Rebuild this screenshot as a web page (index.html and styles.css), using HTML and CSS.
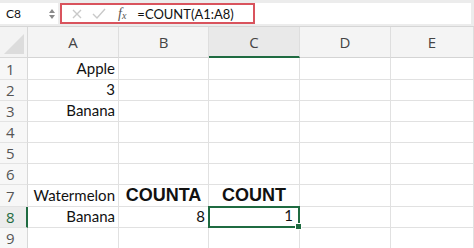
FILE: index.html
```html
<!DOCTYPE html>
<html lang="en">
<head>
    <meta charset="UTF-8">
    <title>COUNT vs COUNTA</title>
    <link rel="stylesheet" href="styles.css">
</head>
<body>
    <div class="formula-bar">
        <div class="name-box">
            <span class="cell-ref">C8</span>
            <svg class="spin" width="6" height="12" viewBox="0 0 6 12">
                <path d="M0 5 L3 1 L6 5 Z M0 7 L3 11 L6 7 Z" fill="#8a8a8a"/>
            </svg>
        </div>
        <div class="formula-box">
            <svg class="tool" width="12" height="12" viewBox="0 0 12 12">
                <path d="M2 2 L10 10 M10 2 L2 10" stroke="#c9c9c9" stroke-width="1.4" fill="none"/>
            </svg>
            <svg class="tool" width="14" height="12" viewBox="0 0 14 12">
                <path d="M1 6 L5 10 L13 1" stroke="#c9c9c9" stroke-width="1.4" fill="none"/>
            </svg>
            <span class="fx">f<sub>x</sub></span>
            <span class="formula">=COUNT(A1:A8)</span>
        </div>
        <div class="formula-rest"></div>
    </div>

    <div class="sheet">
        <div class="corner"><div class="triangle"></div></div>
        <div class="col-head">A</div>
        <div class="col-head">B</div>
        <div class="col-head active">C</div>
        <div class="col-head">D</div>
        <div class="col-head">E</div>

        <div class="row-head">1</div>
        <div class="cell">Apple</div><div class="cell"></div><div class="cell"></div><div class="cell"></div><div class="cell"></div>

        <div class="row-head">2</div>
        <div class="cell">3</div><div class="cell"></div><div class="cell"></div><div class="cell"></div><div class="cell"></div>

        <div class="row-head">3</div>
        <div class="cell">Banana</div><div class="cell"></div><div class="cell"></div><div class="cell"></div><div class="cell"></div>

        <div class="row-head">4</div>
        <div class="cell"></div><div class="cell"></div><div class="cell"></div><div class="cell"></div><div class="cell"></div>

        <div class="row-head">5</div>
        <div class="cell"></div><div class="cell"></div><div class="cell"></div><div class="cell"></div><div class="cell"></div>

        <div class="row-head">6</div>
        <div class="cell"></div><div class="cell"></div><div class="cell"></div><div class="cell"></div><div class="cell"></div>

        <div class="row-head">7</div>
        <div class="cell">Watermelon</div>
        <div class="cell title">COUNTA</div>
        <div class="cell title">COUNT</div>
        <div class="cell"></div><div class="cell"></div>

        <div class="row-head active">8</div>
        <div class="cell">Banana</div>
        <div class="cell">8</div>
        <div class="cell selected">1<span class="handle"></span></div>
        <div class="cell"></div><div class="cell"></div>

        <div class="row-head">9</div>
        <div class="cell"></div><div class="cell"></div><div class="cell"></div><div class="cell"></div><div class="cell"></div>
    </div>
</body>
</html>
```

FILE: styles.css
```css
body {
    margin: 0;
    width: 474px;
    height: 248px;
    overflow: hidden;
    background: #fff;
    font-family: Lato, "Liberation Sans", sans-serif;
    color: #111;
}

/* formula bar */
.formula-bar {
    display: flex;
    height: 27px;
    box-sizing: border-box;
    padding: 3px 0 2px;
    background: #ececec;
    border-bottom: 1px solid #d6d6d6;
}

.name-box {
    width: 58px;
    display: flex;
    align-items: center;
    justify-content: space-between;
    padding: 0 3px 0 6px;
    box-sizing: border-box;
    background: #fff;
    font-size: 12px;
}

.formula-box {
    width: 195px;
    margin-left: 2px;
    display: flex;
    align-items: center;
    box-sizing: border-box;
    border: 2px solid #d9535d;
    background: #fff;
    padding-left: 9px;
    font-size: 12px;
}

.tool {
    margin-right: 9px;
}

.fx {
    font-family: "Liberation Serif", serif;
    font-style: italic;
    font-size: 14px;
    color: #555;
    margin-left: 3px;
    margin-right: 11px;
}

.fx sub {
    font-size: 10px;
    vertical-align: -1px;
}

.formula {
    font-size: 13px;
    color: #111;
}

.formula-rest {
    flex: 1;
    background: #fff;
    margin-right: 3px;
}

/* grid */
.sheet {
    display: grid;
    grid-template-columns: 28px 91px 90px 91px 91px 83px;
    grid-template-rows: 31px 22px 21px 21px 21px 21px 21px 22px 21px 21px;
}

.corner {
    background: #f3f3f3;
    border-right: 1px solid #d8d8d8;
    border-bottom: 1px solid #d8d8d8;
    position: relative;
}

.triangle {
    position: absolute;
    right: 3px;
    bottom: 3px;
    width: 0;
    height: 0;
    border-left: 20px solid transparent;
    border-bottom: 20px solid #dcdcdc;
}

.col-head {
    background: #f4f4f4;
    border-right: 1px solid #dedede;
    border-bottom: 1px solid #d4d4d4;
    display: flex;
    align-items: center;
    justify-content: center;
    font-family: "Open Sans", sans-serif;
    font-size: 15px;
    color: #444;
}

.col-head.active {
    background: #e9e9e9;
    border-bottom: 2px solid #1f6b41;
}

.row-head {
    background: #f7f7f7;
    border-right: 1px solid #d8d8d8;
    border-bottom: 1px solid #e3e3e3;
    display: flex;
    align-items: flex-end;
    padding: 0 0 0 6px;
    font-family: "Open Sans", sans-serif;
    font-size: 15px;
    line-height: 20px;
    color: #555;
}

.row-head.active {
    color: #1f6b41;
    background: #ececec;
    border-right: 2px solid #1f6b41;
}

.cell {
    border-right: 1px solid #e1e1e1;
    border-bottom: 1px solid #e1e1e1;
    display: flex;
    align-items: flex-end;
    justify-content: flex-end;
    padding: 0 3px 2px 0;
    font-size: 15px;
    line-height: 17px;
    white-space: nowrap;
}

.cell.title {
    justify-content: center;
    padding-right: 0;
    font-family: "Liberation Sans", sans-serif;
    font-weight: bold;
    font-size: 18px;
    line-height: 20px;
    padding-bottom: 1px;
}

.cell.selected {
    position: relative;
    border: 2px solid #1f6b41;
    margin: -1px 0 0 -1px;
    padding-right: 5px;
}

.handle {
    position: absolute;
    right: -4px;
    bottom: -4px;
    width: 5px;
    height: 5px;
    background: #1f6b41;
    border: 1px solid #fff;
}
```
